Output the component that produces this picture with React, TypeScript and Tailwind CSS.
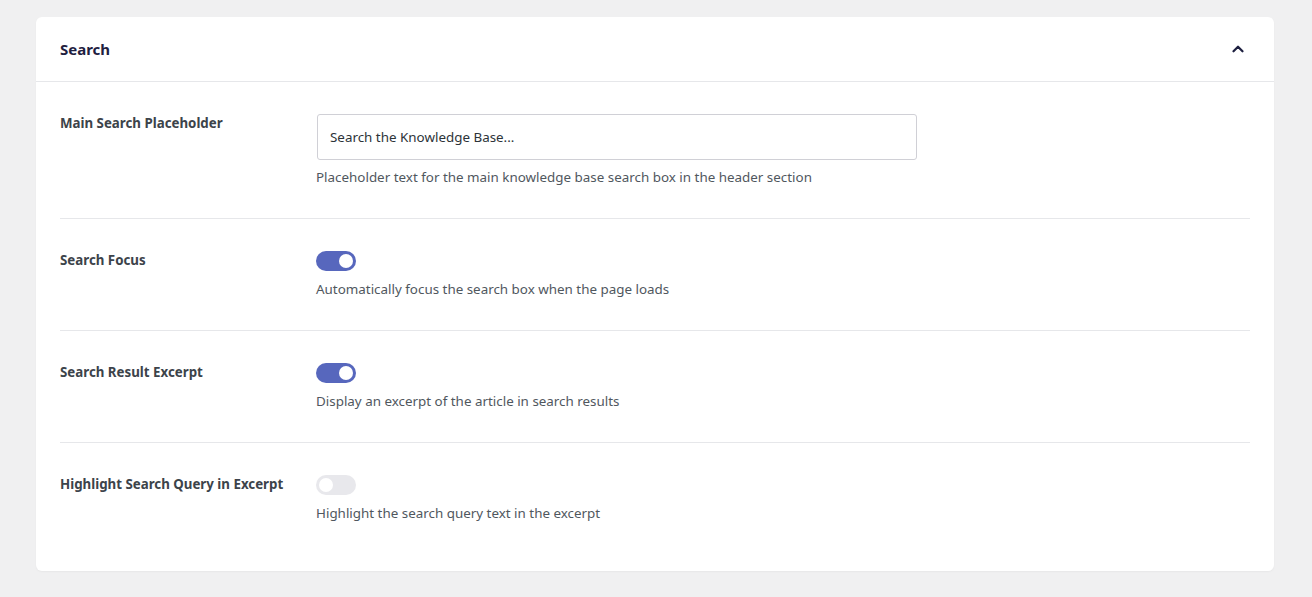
import { ChevronUp } from "lucide-react";

type Row = {
  label: string;
  help: string;
  kind: "input" | "on" | "off";
};

const rows: Row[] = [
  {
    label: "Main Search Placeholder",
    help: "Placeholder text for the main knowledge base search box in the header section",
    kind: "input",
  },
  { label: "Search Focus", help: "Automatically focus the search box when the page loads", kind: "on" },
  { label: "Search Result Excerpt", help: "Display an excerpt of the article in search results", kind: "on" },
  { label: "Highlight Search Query in Excerpt", help: "Highlight the search query text in the excerpt", kind: "off" },
];

function Toggle({ on }: { on: boolean }) {
  return (
    <button
      type="button"
      className={
        on
          ? "relative w-10 h-5 rounded-full bg-[#5767bd]"
          : "relative w-10 h-5 rounded-full bg-[#e8e8ec]"
      }
    >
      <span
        className={
          on
            ? "absolute top-[3px] right-[3px] w-[14px] h-[14px] rounded-full bg-white"
            : "absolute top-[3px] left-[3px] w-[14px] h-[14px] rounded-full bg-white"
        }
      />
    </button>
  );
}

export default function App() {
  return (
    <div className="min-h-[597px] bg-[#f0f0f1] pl-9 pr-[38px] pt-[17px] pb-6 font-['Noto_Sans',sans-serif]">
      <div className="bg-white rounded-md shadow-[0_1px_2px_rgba(0,0,0,0.04)]">
        <div className="flex items-center justify-between h-[65px] pl-6 pr-[27px] border-b border-[#e6e7ea]">
          <h2 className="text-[15px] font-bold text-[#1e2040]">Search</h2>
          <ChevronUp size={18} className="text-[#1e2040]" strokeWidth={3} />
        </div>
        <div className="px-6 pb-[17px]">
          {rows.map((r, i) => (
            <div
              key={r.label}
              className={
                i < rows.length - 1
                  ? "flex pt-8 pb-[31px] border-b border-[#e6e7ea]"
                  : "flex pt-8 pb-[31px]"
              }
            >
              <div className="w-64 shrink-0 text-[13.3px] font-bold leading-[18px] text-[#3c434a]">
                {r.label}
              </div>
              <div
                className={
                  r.kind === "input"
                    ? "flex flex-col items-start gap-[7px]"
                    : "flex flex-col items-start gap-2"
                }
              >
                {r.kind === "input" ? (
                  <input
                    className="ml-px w-[600px] h-[46px] px-3 text-[13.4px] text-[#2c3338] border border-[#d0d0d6] rounded-[3px] outline-none"
                    defaultValue="Search the Knowledge Base..."
                  />
                ) : (
                  <Toggle on={r.kind === "on"} />
                )}
                <p className="text-[13.4px] leading-5 text-[#50575e]">{r.help}</p>
              </div>
            </div>
          ))}
        </div>
      </div>
    </div>
  );
}
